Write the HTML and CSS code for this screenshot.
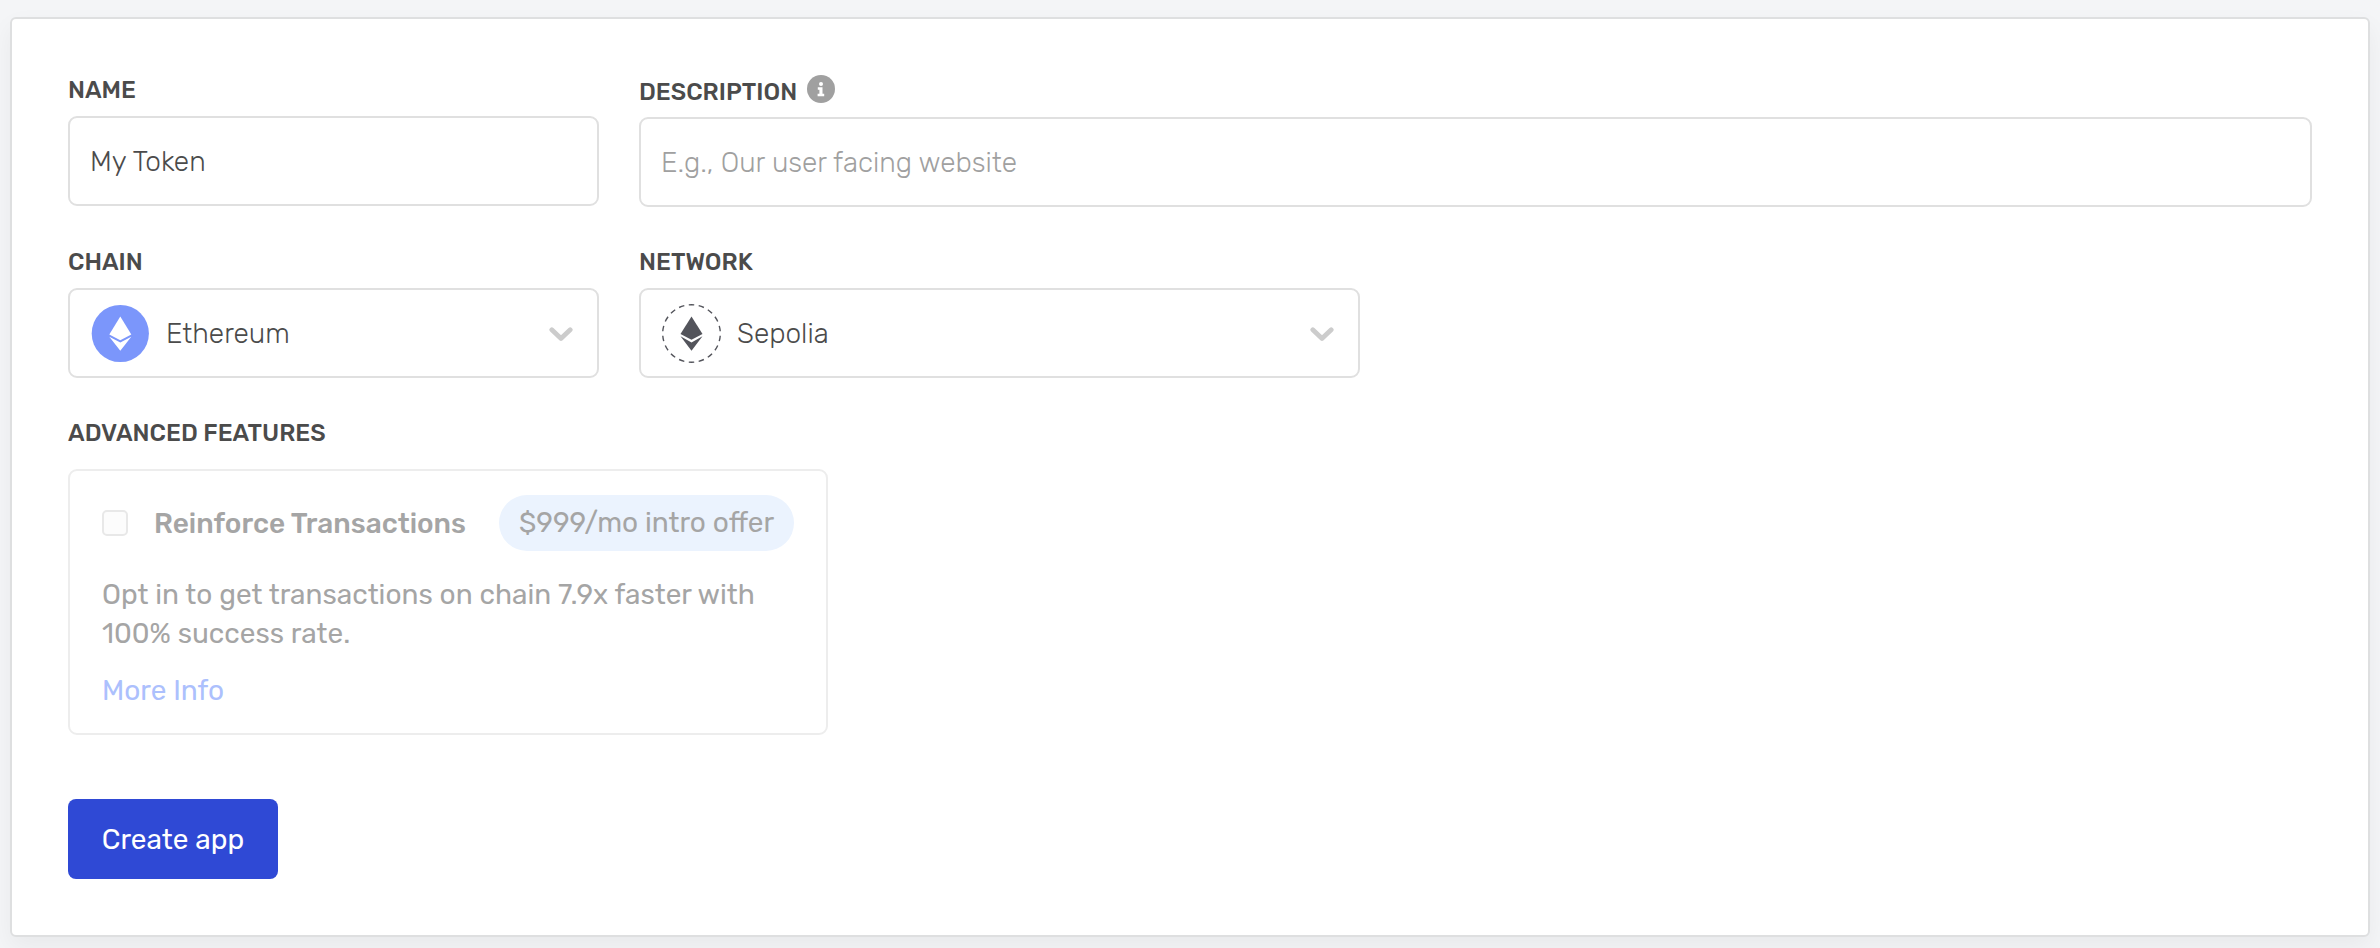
FILE: index.html
```
<!DOCTYPE html>
<html lang="en">
<head>
<meta charset="utf-8">
<title>Create app</title>
<link rel="stylesheet" href="styles.css">
</head>
<body>
<form class="panel">
  <div class="row">
    <div class="field field-narrow">
      <label class="label label-name" for="name">NAME</label>
      <input class="control input-name" id="name" type="text" value="My Token">
    </div>
    <div class="field field-wide">
      <label class="label label-description" for="description">DESCRIPTION
        <svg class="info" viewBox="0 0 28 28" width="28" height="28">
          <circle cx="14" cy="14" r="14" fill="#a0a0a0"/>
          <circle cx="14" cy="9" r="2" fill="#fff"/>
          <path d="M10.8 12.2h4.7v6.6h1.7v2.5h-6.6v-2.5h1.8v-4.1h-1.6z" fill="#fff"/>
        </svg>
      </label>
      <input class="control input-description" id="description" type="text" placeholder="E.g., Our user facing website">
    </div>
  </div>

  <div class="row">
    <div class="field field-narrow">
      <span class="label">CHAIN</span>
      <div class="control select">
        <svg class="coin" viewBox="0 0 59 59" width="59" height="59">
          <circle cx="29.3" cy="29.5" r="28.6" fill="#7b96fb"/>
          <path d="M29.3 12.5l11 18-11 5.8-11-5.8z" fill="#fff"/>
          <path d="M18.3 32.7l11 5.7 11-5.7-11 14z" fill="#fff"/>
        </svg>
        <span class="value">Ethereum</span>
        <svg class="chevron" viewBox="0 0 24 14" width="24" height="14"><path d="M2.8 2.8l9.2 8.6 9.2-8.6"/></svg>
      </div>
    </div>
    <div class="field field-medium">
      <span class="label">NETWORK</span>
      <div class="control select">
        <svg class="coin" viewBox="0 0 59 59" width="59" height="59">
          <circle class="dashes" cx="29.5" cy="29.5" r="28.8" pathLength="180" transform="rotate(-90 29.5 29.5)"/>
          <path d="M29.5 12.5l11 17.5-11 5.8-11-5.8z" fill="#53545b"/>
          <path d="M18.5 32.3l11 6.1 11-6.1-11 14.4z" fill="#53545b"/>
        </svg>
        <span class="value">Sepolia</span>
        <svg class="chevron" viewBox="0 0 24 14" width="24" height="14"><path d="M2.8 2.8l9.2 8.6 9.2-8.6"/></svg>
      </div>
    </div>
  </div>

  <span class="label label-advanced">ADVANCED FEATURES</span>
  <section class="feature">
    <div class="feature-head">
      <span class="checkbox"></span>
      <span class="feature-title">Reinforce Transactions</span>
      <span class="pill">$999/mo intro offer</span>
    </div>
    <p class="feature-text">Opt in to get transactions on chain 7.9x faster with<br>100% success rate.</p>
    <a class="more">More Info</a>
  </section>

  <button class="submit" type="button">Create app</button>
</form>
</body>
</html>
```

FILE: styles.css
```
* { box-sizing: border-box; }

body {
  margin: 0;
  height: 948px;
  padding: 17px 10px 0;
  overflow: hidden;
  background: #f4f5f7;
  color: #4b4b4b;
  font: 400 28px/39px Rubik, Roboto, sans-serif;
}

.panel {
  height: 920px;
  padding: 57px 56px 0;
  background: #fff;
  border: 2px solid #dedfe0;
  border-radius: 6px;
  box-shadow: 0 10px 24px rgba(0, 0, 0, 0.05);
}

.row {
  display: flex;
  gap: 40px;
  align-items: flex-start;
  margin-bottom: 41px;
}
.row:first-child { height: 131px; }

.field-narrow { width: 531px; }
.field-medium { width: 721px; }
.field-wide { width: 1673px; }

.label {
  display: flex;
  align-items: flex-start;
  height: 28px;
  margin-bottom: 12px;
  font-size: 24px;
  font-weight: 500;
  line-height: 28px;
  white-space: nowrap;
}
.label-description { margin: 2px 0 11px; }
.label-advanced { margin-bottom: 22px; }
.info { margin: -3px 0 0 10px; }

.control {
  display: flex;
  align-items: center;
  width: 100%;
  height: 90px;
  padding: 0 20px;
  background: #fff;
  border: 2px solid #e0e0e0;
  border-radius: 9px;
  color: #4b4b4b;
  font: 300 28px/39px Rubik, Roboto, sans-serif;
}
.input-description::placeholder { color: #a0a0a0; opacity: 1; }

.select { padding: 0 24px 0 21px; }
.value { flex: 1; margin-left: 16px; }

.dashes {
  fill: none;
  stroke: #53545b;
  stroke-width: 1.4;
  stroke-dasharray: 5.5 4.5;
  stroke-dashoffset: 2.75;
}
.chevron { margin-top: 2px; }
.chevron path {
  fill: none;
  stroke: #ccc;
  stroke-width: 4.8;
  stroke-linecap: round;
  stroke-linejoin: round;
}

.feature {
  width: 760px;
  height: 266px;
  padding: 24px 32px 0;
  border: 2px solid #ededed;
  border-radius: 9px;
  color: #a5a5a5;
}
.feature-head {
  display: flex;
  align-items: center;
  height: 56px;
}
.checkbox {
  width: 26px;
  height: 26px;
  background: #fcfcfc;
  border: 2px solid #e8e8e8;
  border-radius: 5px;
}
.feature-title {
  margin-left: 26px;
  font-weight: 500;
}
.pill {
  width: 295px;
  height: 56px;
  margin-left: auto;
  padding-left: 20px;
  background: #ebf3fe;
  border-radius: 28px;
  line-height: 56px;
  white-space: nowrap;
}
.feature-text {
  margin: 24px 0 18px;
  white-space: nowrap;
}
.more {
  display: block;
  color: #acc0fd;
}

.submit {
  display: block;
  width: 210px;
  height: 80px;
  margin-top: 64px;
  padding: 0;
  background: #2f49d5;
  border: 0;
  border-radius: 8px;
  color: #fff;
  font: 400 28px/39px Rubik, Roboto, sans-serif;
}
```
